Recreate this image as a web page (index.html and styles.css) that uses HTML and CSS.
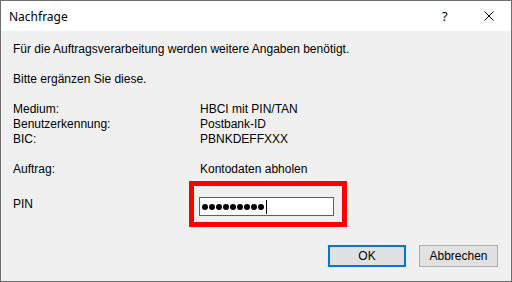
FILE: index.html
```html
<!DOCTYPE html>
<html lang="de">
<head>
    <meta charset="UTF-8">
    <title>Nachfrage</title>
    <link rel="stylesheet" href="styles.css">
</head>
<body>
<div class="window">
    <div class="titlebar">
        <span class="title">Nachfrage</span>
        <span class="help">?</span>
        <svg class="close" width="10" height="10" viewBox="0 0 10 10">
            <path d="M0.5 0.5 L9.5 9.5 M9.5 0.5 L0.5 9.5" stroke="#000" stroke-width="1" fill="none"/>
        </svg>
    </div>
    <div class="content">
        <p class="line">Für die Auftragsverarbeitung werden weitere Angaben benötigt.</p>
        <p class="line gap">Bitte ergänzen Sie diese.</p>

        <div class="grid gap">
            <span>Medium:</span><span>HBCI mit PIN/TAN</span>
            <span>Benutzerkennung:</span><span>Postbank-ID</span>
            <span>BIC:</span><span>PBNKDEFFXXX</span>
        </div>

        <div class="grid gap">
            <span>Auftrag:</span><span>Kontodaten abholen</span>
        </div>

        <div class="pinrow">
            <span class="label">PIN</span>
            <div class="mark">
                <div class="field">
                    <i></i><i></i><i></i><i></i><i></i><i></i><i></i><i></i><i></i>
                    <b class="caret"></b>
                </div>
            </div>
        </div>

        <div class="buttons">
            <button class="btn default">OK</button>
            <button class="btn">Abbrechen</button>
        </div>
    </div>
</div>
</body>
</html>
```

FILE: styles.css
```css
html, body {
    margin: 0;
    padding: 0;
    background: #fff;
}

.window {
    width: 512px;
    height: 282px;
    box-sizing: border-box;
    border: 1px solid #6e6e6e;
    background: #f0f0f0;
    display: flex;
    flex-direction: column;
}

.titlebar {
    height: 30px;
    background: #fff;
    display: flex;
    align-items: center;
    padding-left: 8px;
    font-family: "Noto Sans", "Open Sans", sans-serif;
    font-size: 12px;
    color: #000;
}

.title {
    flex: 1;
}

.help {
    width: 12px;
    margin-right: 30px;
    font-size: 13px;
}

.close {
    margin-right: 17px;
}

.content {
    flex: 1;
    padding: 11px 12px 0 12px;
    font-family: "Liberation Sans", Arial, sans-serif;
    font-size: 12px;
    line-height: 15px;
    color: #000;
}

.line {
    margin: 0;
}

.gap {
    margin-top: 15px;
}

.grid {
    display: grid;
    grid-template-columns: 187px 1fr;
}

.pinrow {
    display: flex;
    align-items: center;
    margin-top: 4px;
}

.label {
    width: 176px;
}

.mark {
    border: 5px solid #ff0000;
    padding: 11px 8px 6px 5px;
}

.field {
    width: 131px;
    height: 17px;
    border: 1px solid #0078d7;
    background: #fff;
    display: flex;
    align-items: center;
    padding-left: 2px;
}

.field i {
    width: 6px;
    height: 6px;
    border-radius: 50%;
    background: #000;
    margin-right: 1px;
}

.caret {
    width: 1px;
    height: 14px;
    background: #000;
    margin-left: 1px;
}

.buttons {
    display: flex;
    justify-content: flex-end;
    gap: 13px;
    margin-top: 18px;
    padding-right: 1px;
}

.btn {
    width: 79px;
    height: 22px;
    box-sizing: border-box;
    border: 1px solid #adadad;
    background: #e1e1e1;
    font-family: "Liberation Sans", Arial, sans-serif;
    font-size: 12px;
    color: #000;
    padding: 0;
}

.btn.default {
    width: 78px;
    border: 2px solid #0078d7;
}
```
